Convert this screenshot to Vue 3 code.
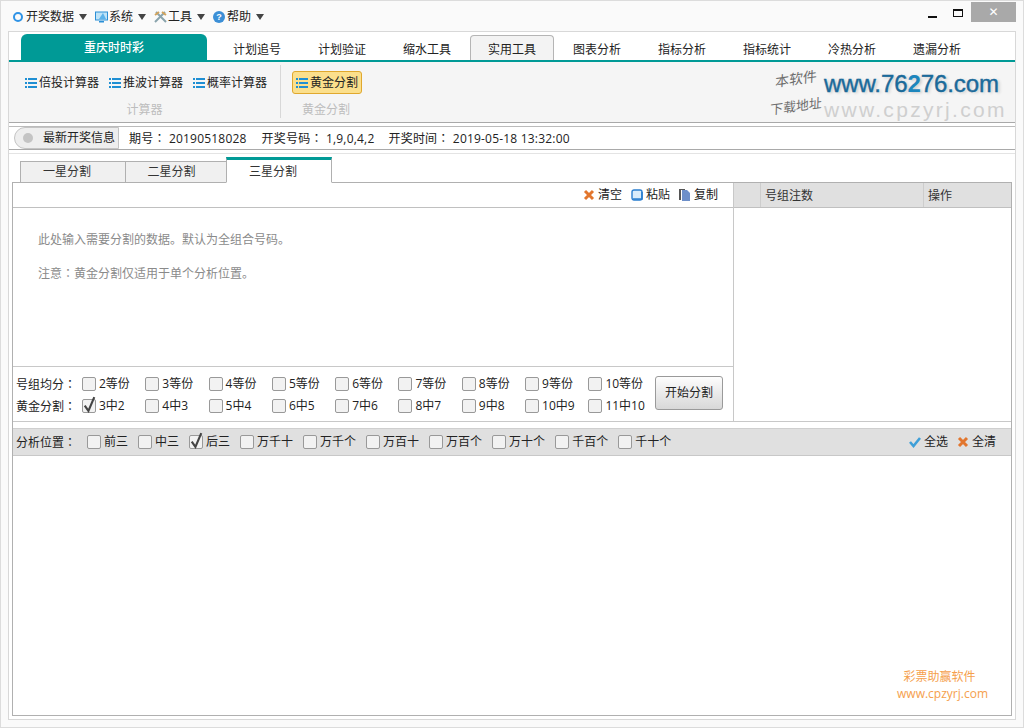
<script setup>
const menus = [
  { text: '开奖数据', icon: 'ring' },
  { text: '系统', icon: 'screen' },
  { text: '工具', icon: 'tools' },
  { text: '帮助', icon: 'help' }
]
const tabs = ['计划追号', '计划验证', '缩水工具', '实用工具', '图表分析', '指标分析', '指标统计', '冷热分析', '遗漏分析']
const calcs = ['倍投计算器', '推波计算器', '概率计算器']
const subTabs = ['一星分割', '二星分割', '三星分割']
const row1 = ['2等份', '3等份', '4等份', '5等份', '6等份', '7等份', '8等份', '9等份', '10等份']
const row2 = ['3中2', '4中3', '5中4', '6中5', '7中6', '8中7', '9中8', '10中9', '11中10']
const positions = ['前三', '中三', '后三', '万千十', '万千个', '万百十', '万百个', '万十个', '千百个', '千十个']
</script>

<template>
  <div class="app">
    <header class="titlebar">
      <div v-for="m in menus" :key="m.text" class="menu">
        <span v-if="m.icon === 'ring'" class="ring"></span>
        <svg v-else-if="m.icon === 'screen'" class="mi" viewBox="0 0 13 13">
          <rect x="0.5" y="1" width="12" height="8" fill="#bfe3f7" stroke="#2b8fd6" />
          <path d="M8 2 L4 8 L11 8 Z" fill="#5cb3ea" />
          <rect x="4" y="10" width="5" height="1.5" fill="#2b8fd6" />
        </svg>
        <svg v-else-if="m.icon === 'tools'" class="mi" viewBox="0 0 13 13">
          <path d="M2 1 L12 11 M11 1 L1 11" stroke="#8aa4ad" stroke-width="2" />
          <path d="M1 4 L5 1 M8 1 L12 4" stroke="#d2a35c" stroke-width="2" />
        </svg>
        <span v-else class="help">?</span>
        <span class="menu-text">{{ m.text }}</span>
        <span class="tri"></span>
      </div>
      <div class="winbtns">
        <span class="min"></span>
        <span class="max"></span>
        <span class="close">✕</span>
      </div>
    </header>

    <main class="main">
      <nav class="tabs">
        <div class="brand">重庆时时彩</div>
        <div v-for="t in tabs" :key="t" class="tab">
          <span :class="{ 'tab-on': t === '实用工具' }">{{ t }}</span>
        </div>
      </nav>

      <section class="ribbon">
        <div class="group group-calc">
          <div class="group-btns">
            <div v-for="c in calcs" :key="c" class="rbtn">
              <svg class="li" viewBox="0 0 12 10">
                <path d="M0 0h2v2H0zM3 0h9v2H3zM0 4h2v2H0zM3 4h9v2H3zM0 8h2v2H0zM3 8h9v2H3z" fill="#1f8fd3" />
              </svg>
              {{ c }}
            </div>
          </div>
          <div class="group-label">计算器</div>
        </div>
        <div class="group group-gold">
          <div class="group-btns">
            <div class="rbtn rbtn-on">
              <svg class="li" viewBox="0 0 12 10">
                <path d="M0 0h2v2H0zM3 0h9v2H3zM0 4h2v2H0zM3 4h9v2H3zM0 8h2v2H0zM3 8h9v2H3z" fill="#1f8fd3" />
              </svg>
              黄金分割
            </div>
          </div>
          <div class="group-label">黄金分割</div>
        </div>
        <div class="logo">
          <span class="hand h1">本软件</span>
          <span class="hand h2">下载地址</span>
          <span class="l1">www.76<b>2</b>76.com</span>
          <span class="l2">www.cpzyrj.com</span>
        </div>
      </section>

      <section class="info">
        <div class="info-label"><span class="dot"></span>最新开奖信息</div>
        <span class="i1">期号<i class="colon">：</i> 20190518028</span>
        <span class="i2">开奖号码<i class="colon">：</i> 1,9,0,4,2</span>
        <span class="i3">开奖时间<i class="colon">：</i> 2019-05-18 13:32:00</span>
      </section>

      <section class="work">
        <div class="subtabs">
          <div v-for="s in subTabs" :key="s" class="subtab" :class="{ 'subtab-on': s === '三星分割' }">{{ s }}</div>
        </div>

        <div class="panel">
          <div class="top">
            <div class="left">
              <div class="tools">
                <span class="tool">
                  <svg class="ti" viewBox="0 0 12 12"><path d="M2 2 L10 10 M10 2 L2 10" stroke="#e2762e" stroke-width="3" /></svg>清空
                </span>
                <span class="tool">
                  <svg class="ti" viewBox="0 0 12 12">
                    <rect x="1" y="1" width="10" height="10" rx="2" fill="#d8ecfb" stroke="#2a7fd0" stroke-width="1.4" />
                    <path d="M2 10 H11 V3" fill="none" stroke="#2a7fd0" stroke-width="1.6" />
                  </svg>粘贴
                </span>
                <span class="tool">
                  <svg class="ti" viewBox="0 0 12 12"><path d="M0 0h2v11H0zM2 0h4v1H2z" fill="#555" /><path d="M3 1h5l3 3v8H3z" fill="#6d8fc9" /></svg>复制
                </span>
              </div>
              <div class="textarea">
                <p>此处输入需要分割的数据。默认为全组合号码。</p>
                <p>注意<i class="colon">：</i>黄金分割仅适用于单个分析位置。</p>
              </div>
              <div class="options">
                <div class="opt-rows">
                  <div class="opt-row">
                    <span class="opt-name">号组均分<i class="colon">：</i></span>
                    <label v-for="o in row1" :key="o" class="opt"><span class="cb"></span>{{ o }}</label>
                  </div>
                  <div class="opt-row">
                    <span class="opt-name">黄金分割<i class="colon">：</i></span>
                    <label v-for="o in row2" :key="o" class="opt">
                      <span class="cb"><svg v-if="o === '3中2'" class="tick" viewBox="0 0 14 16"><path d="M2.5 9 L6 14 L11.5 1" fill="none" stroke="#444" stroke-width="2" /></svg></span>{{ o }}
                    </label>
                  </div>
                </div>
                <button class="start">开始分割</button>
              </div>
            </div>
            <div class="right">
              <div class="thead">
                <span class="c1"></span>
                <span class="c2">号组注数</span>
                <span class="c3">操作</span>
              </div>
            </div>
          </div>

          <div class="bar">
            <span class="bar-name">分析位置<i class="colon">：</i></span>
            <label v-for="p in positions" :key="p" class="pos">
              <span class="cb"><svg v-if="p === '后三'" class="tick" viewBox="0 0 14 16"><path d="M2.5 9 L6 14 L11.5 1" fill="none" stroke="#444" stroke-width="2" /></svg></span>{{ p }}
            </label>
            <span class="bar-tools">
              <span class="tool">
                <svg class="ti" viewBox="0 0 12 12"><path d="M1 6 L4.5 10 L11 2" fill="none" stroke="#3e9fd8" stroke-width="2.6" /></svg>全选
              </span>
              <span class="tool">
                <svg class="ti" viewBox="0 0 12 12"><path d="M2 2 L10 10 M10 2 L2 10" stroke="#e2762e" stroke-width="3" /></svg>全清
              </span>
            </span>
          </div>

          <div class="result">
            <div class="wm">
              <div class="wm-cn">彩票助赢软件</div>
              <div>www.cpzyrj.com</div>
            </div>
          </div>
        </div>
      </section>
    </main>
  </div>
</template>

<style>
html, body { margin: 0; padding: 0; background: #fafafa; }
</style>

<style scoped>
.app {
  box-sizing: border-box;
  width: 1024px;
  height: 728px;
  border: 1px solid #dcdcdc;
  background: #fafafa;
  display: flex;
  flex-direction: column;
  font: 12px/16px "Open Sans", "Noto Sans CJK SC", sans-serif;
  color: #222;
  overflow: hidden;
}
.colon { font-style: normal; font-family: "Noto Sans CJK TC", sans-serif; }
.titlebar {
  height: 30px;
  flex: none;
  display: flex;
  align-items: flex-start;
  padding-left: 12px;
  position: relative;
}
.menu { display: flex; align-items: center; height: 16px; margin-top: 8px; margin-right: 8px; }
.ring { box-sizing: border-box; width: 10px; height: 10px; border: 2px solid #2f93e6; border-radius: 50%; margin-right: 3px; }
.mi { width: 13px; height: 13px; margin-right: 1px; }
.help {
  width: 12px; height: 12px; border-radius: 50%; background: #3c8fd6; color: #fff;
  font: bold 9px/12px "Liberation Sans", sans-serif; text-align: center; margin-right: 2px;
}
.tri { width: 0; height: 0; border: 4px solid transparent; border-top: 6px solid #444; border-bottom: 0; margin-left: 5px; }
.winbtns { position: absolute; right: 7px; top: 1px; display: flex; }
.min { width: 9px; height: 2px; background: #111; position: absolute; right: 79px; top: 14px; }
.max { box-sizing: border-box; width: 10px; height: 8px; border: 1px solid #111; border-top-width: 2px; position: absolute; right: 53px; top: 7px; }
.close { width: 45px; height: 20px; background: #a9a9a9; color: #fff; text-align: center; font: 12px/20px "DejaVu Sans", sans-serif; }

.main {
  flex: none;
  box-sizing: border-box;
  height: 689px;
  margin: 0 7px;
  border: 1px solid #d8d8d8;
  background: #fff;
  display: flex;
  flex-direction: column;
}
.tabs { flex: none; height: 28px; display: flex; align-items: flex-end; padding-left: 12px; border-bottom: 2px solid #009a96; }
.brand {
  width: 186px; height: 26px; background: #009a96; color: #fff; border-radius: 6px 6px 0 0;
  text-align: center; line-height: 28px; font-weight: 500; margin-right: 7.5px;
}
.tab { width: 85px; height: 25px; text-align: center; position: relative; line-height: 29px; }
.tab-on {
  position: absolute; left: 0.5px; right: 0.5px; top: 0; height: 25px; line-height: 27px;
  box-sizing: border-box; border: 1px solid #b5b5b5; border-bottom: 0; border-radius: 4px 4px 0 0; background: #f3f3f3;
}
.ribbon {
  flex: none; box-sizing: border-box; height: 61px; background: #f5f5f5; border-bottom: 1px solid #a9a9a9;
  display: flex; position: relative; padding-top: 3px;
}
.group { display: flex; flex-direction: column; align-items: stretch; height: 53px; }
.group-calc { width: 271px; border-right: 1px solid #d8d8d8; }
.group-gold { padding-left: 11px; width: 68px; }
.group-btns { height: 36px; display: flex; padding-top: 6px; box-sizing: border-box; align-items: flex-start; }
.group-calc .group-btns { padding-left: 16px; gap: 10px; }
.rbtn { display: flex; align-items: center; height: 23px; white-space: nowrap; }
.li { width: 12px; height: 10px; margin-right: 2px; }
.rbtn-on {
  box-sizing: border-box; width: 70px; flex: none; padding-left: 3px; background: #fbdf8c; border: 1px solid #e0a82e; border-radius: 3px;
}
.group-label { text-align: center; color: #bdbdbd; line-height: 16px; margin-top: 7px; }
.logo { position: absolute; left: 761px; top: 2px; width: 240px; height: 56px; white-space: nowrap; }
.l1, .l2, .hand { position: absolute; }
.l1 {
  left: 54px; top: 8px; height: 23px; font: 24px/23px "Liberation Sans", sans-serif; letter-spacing: -0.1px;
  color: #1b6a9a; -webkit-text-stroke: 0.4px #1b6a9a; text-shadow: 2px 1px 3px #c9c9c9;
}
.l1 b { font-weight: 700; font-size: 24px; line-height: 20px; color: #1d86bd; -webkit-text-stroke: 0; }
.l2 { left: 54px; top: 36px; height: 20px; font: 21px/20px "Liberation Sans", sans-serif; letter-spacing: 2.3px; color: #cfcfcf; }
.hand { font-family: "Liberation Serif", "Noto Sans CJK SC", serif; color: #6d6d6d; transform: rotate(-8deg) skewX(-10deg); }
.h1 { left: 5px; top: 8px; font-size: 14px; letter-spacing: 0; }
.h2 { left: 0; top: 35px; font-size: 13px; }

.info {
  flex: none; box-sizing: border-box; height: 24px; margin-top: 3px; border-top: 1px solid #bbb; border-bottom: 1px solid #a9a9a9;
  display: flex; align-items: center; padding-left: 5px; white-space: nowrap; letter-spacing: 0.2px;
}
.info-label {
  box-sizing: border-box; width: 105px; height: 22px; background: #eee; border: 1px solid #c4c4c4; border-radius: 11px 0 0 11px;
  display: flex; align-items: center; padding-left: 8px; letter-spacing: 0;
}
.dot { width: 10px; height: 10px; border-radius: 50%; background: #c4c4c4; margin-right: 10px; flex: none; }
.i1 { margin-left: 10px; }
.i2 { margin-left: 15px; }
.i3 { margin-left: 14px; }

.work { flex: 1; min-height: 0; background: #fff; margin-top: 3px; border-top: 1px solid #e4e4e4; padding: 4px 3px 3px 3px; display: flex; flex-direction: column; }
.subtabs { flex: none; display: flex; height: 25px; align-items: flex-end; padding-left: 8px; margin-bottom: -1px; position: relative; }
.subtab {
  box-sizing: border-box; width: 105px; height: 22px; line-height: 20px; text-align: center; background: #f0f0f0;
  border: 1px solid #b0b0b0; border-right: 0; color: #333; padding-right: 12px;
}
.subtab:nth-child(2) { width: 101px; padding-right: 9px; }
.subtab-on {
  width: 106px; height: 26px; line-height: 24px; background: #fff; border: 1px solid #b0b0b0; border-top: 3px solid #009a96; border-bottom: 1px solid #fff; position: relative; z-index: 1; padding-right: 12px;
}
.panel { flex: 1; min-height: 0; border: 1px solid #b0b0b0; display: flex; flex-direction: column; }
.top { flex: none; height: 238px; display: flex; border-bottom: 1px solid #c8c8c8; }
.left { width: 720px; flex: none; border-right: 1px solid #c8c8c8; display: flex; flex-direction: column; }
.tools { flex: none; box-sizing: border-box; height: 25px; border-bottom: 1px solid #c0c0c0; display: flex; align-items: center; justify-content: flex-end; gap: 9px; padding-right: 15px; }
.tool { display: inline-flex; align-items: center; }
.ti { width: 12px; height: 12px; margin-right: 3px; }
.textarea { flex: 1; color: #8a8a8a; padding: 24px 0 0 25px; }
.textarea p { margin: 0 0 17px; line-height: 16px; }
.options { flex: none; box-sizing: border-box; height: 55px; border-top: 1px solid #c8c8c8; display: flex; padding: 6px 0 0 3px; }
.opt-rows { width: 639px; }
.opt-row { display: flex; height: 22px; align-items: center; white-space: nowrap; }
.opt-name { width: 66px; flex: none; }
.opt { width: 63.3px; flex: none; display: flex; align-items: center; }
.cb {
  box-sizing: border-box; flex: none; width: 14px; height: 14px; background: #f2f2f2; border: 1px solid #999; border-radius: 2px;
  margin-right: 3px; position: relative;
}
.tick { position: absolute; left: -1px; top: -4px; width: 15px; height: 17px; }
.start {
  box-sizing: border-box; width: 68px; height: 34px; margin-top: 3px; padding: 0; border: 1px solid #9a9a9a; border-radius: 3px;
  background: linear-gradient(#fdfdfd, #d8d8d8); font: inherit; color: #222;
}
.right { flex: 1; }
.thead { box-sizing: border-box; height: 25px; background: #e0e0e0; border-bottom: 1px solid #c0c0c0; display: flex; line-height: 25px; }
.thead span { box-sizing: border-box; border-right: 1px solid #cdcdcd; padding-left: 4px; color: #333; }
.c1 { width: 27px; }
.c2 { width: 163px; }
.c3 { flex: 1; border-right: 0 !important; }

.bar {
  flex: none; box-sizing: border-box; height: 28px; margin-top: 6px; background: #e0e0e0; border-top: 1px solid #cfcfcf; border-bottom: 1px solid #c8c8c8;
  display: flex; align-items: center; padding-left: 3px; white-space: nowrap;
}
.bar-name { width: 71px; flex: none; }
.pos { display: flex; align-items: center; margin-right: 10px; }
.bar-tools { margin-left: auto; display: flex; gap: 9px; padding-right: 15px; }
.result { flex: 1; position: relative; }
.wm { position: absolute; right: 23px; bottom: 13px; color: #f5a04d; text-align: center; line-height: 17px; }
.wm-cn { padding-right: 6px; }
</style>
